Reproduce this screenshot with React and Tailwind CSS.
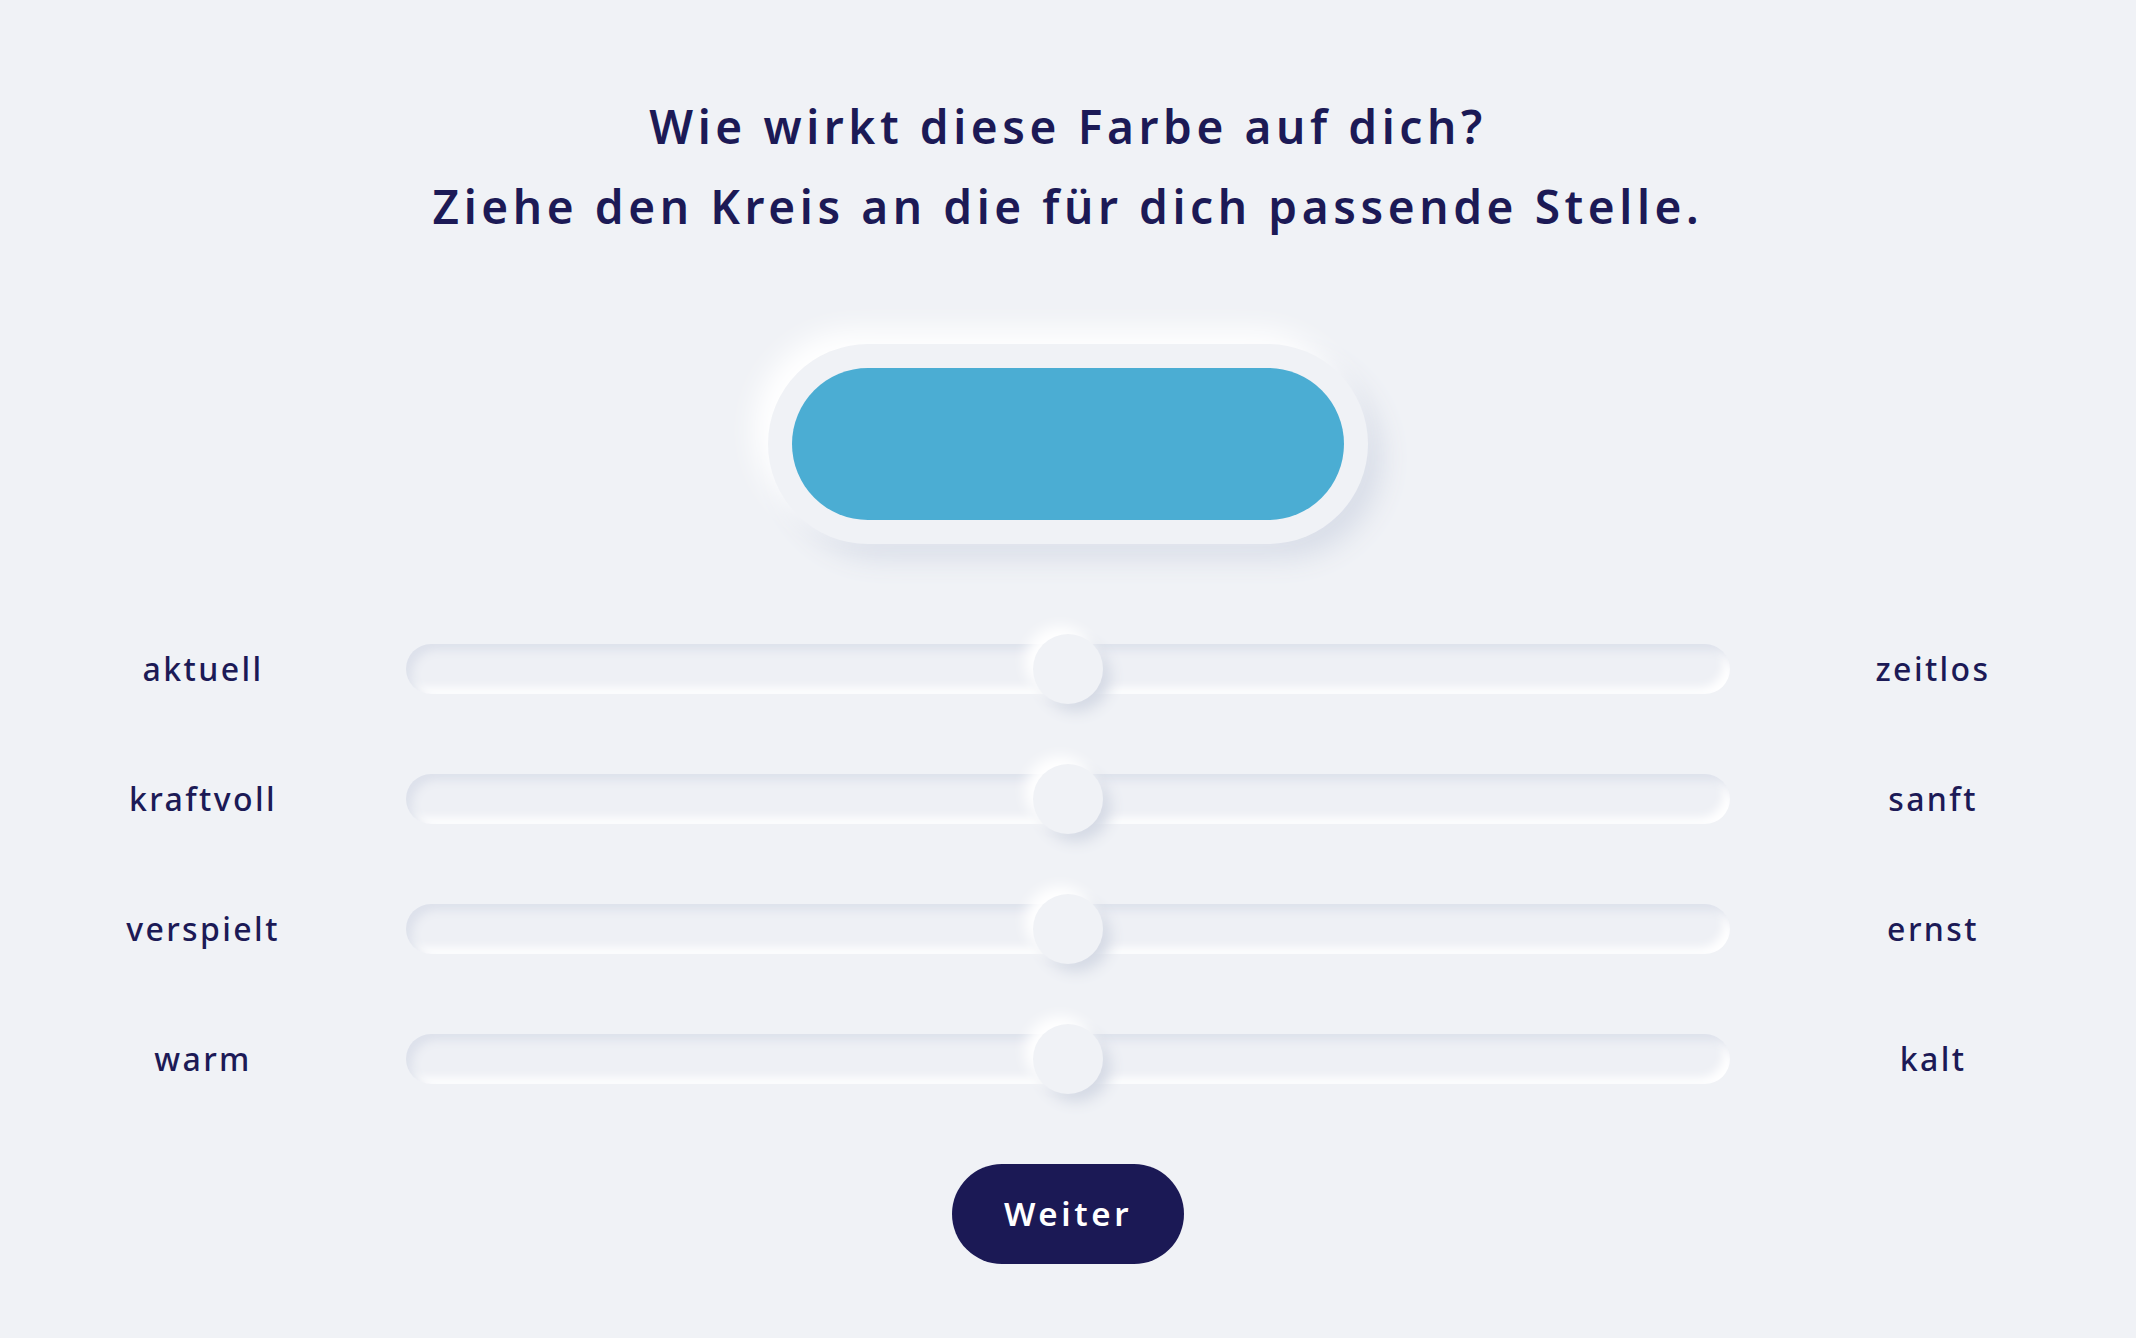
import React, { useState } from 'react';

const pairs = [
  ['aktuell', 'zeitlos'],
  ['kraftvoll', 'sanft'],
  ['verspielt', 'ernst'],
  ['warm', 'kalt'],
];

const Slider = ({ left, right, value, onChange }) => {
  return (
    <div className="grid grid-cols-[406px_1fr_406px] items-center h-[130px]">
      <span className="text-center text-[32px] font-medium tracking-[0.075em] text-[#1c1a56]">{left}</span>
      <div className="relative h-[50px] rounded-full bg-[#eef0f5] shadow-[inset_6px_6px_10px_#dde1eb,inset_-6px_-6px_10px_#ffffff]">
        <div
          className="absolute top-1/2 w-[70px] h-[70px] -translate-x-1/2 -translate-y-1/2 rounded-full bg-[#f0f2f6] shadow-[-8px_-8px_14px_#ffffff,8px_8px_14px_#d5dae5] cursor-pointer"
          style={{ left: `${value}%` }}
          onClick={() => onChange(value)}
        />
      </div>
      <span className="text-center text-[32px] font-medium tracking-[0.075em] text-[#1c1a56]">{right}</span>
    </div>
  );
};

export default function App() {
  const [values, setValues] = useState([50, 50, 50, 50]);

  const update = (i, v) => {
    const next = [...values];
    next[i] = v;
    setValues(next);
  };

  return (
    <div className="min-h-screen w-full bg-[#f0f2f6] flex flex-col items-center pt-[86px] font-['Noto_Sans',sans-serif]">
      <h1 className="text-center text-[46px] leading-[80px] font-semibold tracking-[0.1em] text-[#1c1a56]">
        Wie wirkt diese Farbe auf dich?
        <br />
        Ziehe den Kreis an die für dich passende Stelle.
      </h1>

      <div className="mt-[98px] w-[600px] h-[200px] p-6 rounded-full bg-[#f0f2f6] shadow-[-14px_-14px_28px_#ffffff,14px_14px_28px_#d8dde8]">
        <div className="w-full h-full rounded-full bg-[#4badd3]" />
      </div>

      <div className="mt-[60px] w-full">
        {pairs.map(([l, r], i) => (
          <Slider key={l} left={l} right={r} value={values[i]} onChange={(v) => update(i, v)} />
        ))}
      </div>

      <button className="mt-[40px] w-[232px] h-[100px] rounded-full bg-[#1b1955] text-white text-[33px] font-semibold tracking-[0.11em]">
        Weiter
      </button>
    </div>
  );
}
